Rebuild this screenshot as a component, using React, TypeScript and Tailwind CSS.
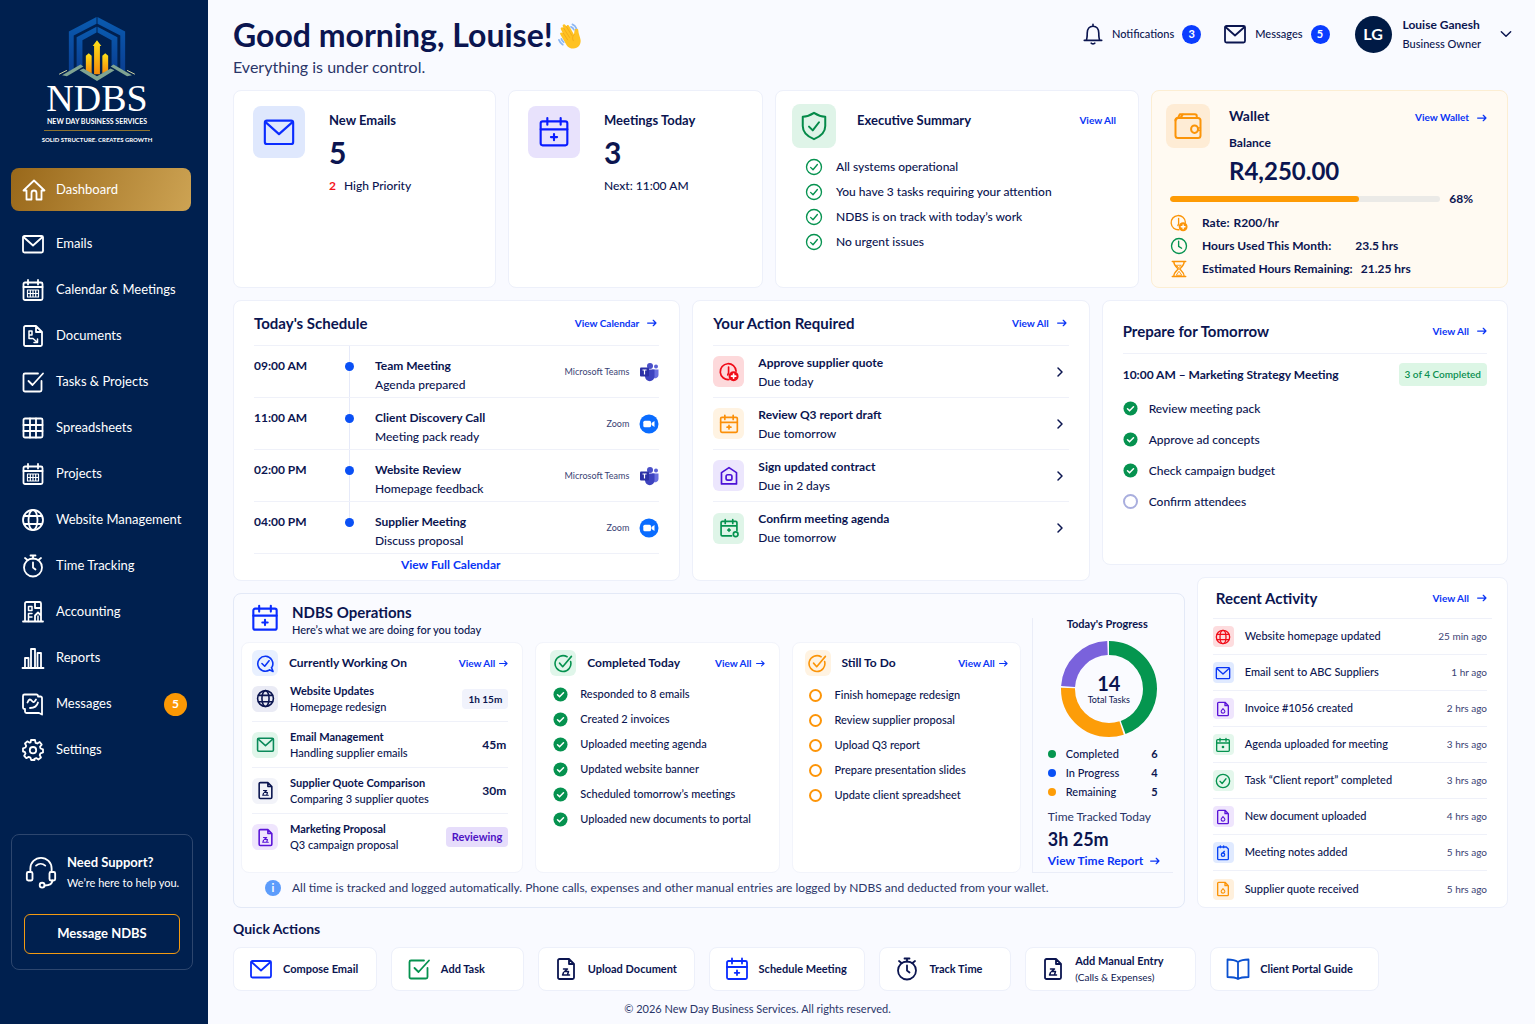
import React from 'react';

type IconName =
  | 'home'
  | 'mail'
  | 'calendarGrid'
  | 'calendarPlus'
  | 'calendarDot'
  | 'calendarGear'
  | 'documentFlow'
  | 'document'
  | 'invoice'
  | 'notes'
  | 'taskBox'
  | 'table'
  | 'globe'
  | 'stopwatch'
  | 'building'
  | 'bars'
  | 'messages'
  | 'gear'
  | 'headset'
  | 'bell'
  | 'shield'
  | 'wallet'
  | 'clock'
  | 'clockCoin'
  | 'hourglass'
  | 'circleCheck'
  | 'circleCheckOut'
  | 'circleCheckTail'
  | 'houseLock'
  | 'book'
  | 'chevronDown'
  | 'chevronRight'
  | 'arrow';

const ICONS: Record<IconName, React.ReactNode> = {
  home: <path d="M1.500 12.500 12 2.500l10.500 10H19.500v9h-5v-6.500a2.500 2.500 0 0 0-5 0v6.500h-5v-9z" />,
  mail: (
    <>
      <rect x="2" y="4" width="20" height="16.500" rx="1.500" />
      <path d="m2.500 5 9.500 8.500L21.500 5" />
    </>
  ),
  calendarGrid: (
    <>
      <rect x="2.500" y="4.500" width="19" height="17.500" rx="1.500" />
      <path d="M2.500 9h19M7 2v4.500M17 2v4.500" />
      <path d="M6.500 12h11v7h-11zM6.500 15.500h11M9.300 12v7M12 12v7M14.700 12v7" strokeWidth="1.200" />
    </>
  ),
  calendarPlus: (
    <>
      <rect x="2" y="4" width="20" height="18" rx="1.500" />
      <path d="M2 10h20M7 1.500v5M17 1.500v5M12 13.500v4.600M9.700 15.800h4.600" />
    </>
  ),
  calendarDot: (
    <>
      <rect x="2.500" y="4" width="19" height="17.500" rx="1.500" />
      <path d="M2.500 9h19M7.500 2v4.500M16.500 2v4.500" />
      <circle cx="12" cy="15" r="1" fill="currentColor" />
    </>
  ),
  calendarGear: (
    <>
      <path d="M15 21.500H4A1.500 1.500 0 0 1 2.500 20V5.500A1.500 1.500 0 0 1 4 4h16a1.500 1.500 0 0 1 1.500 1.500V15M2.500 9.500h19M7.500 2v4.500M16.500 2v4.500M12 13v3M10.500 14.500h3" />
      <circle cx="20" cy="19.500" r="2.800" />
    </>
  ),
  documentFlow: (
    <>
      <path d="M3 3.500A1.500 1.500 0 0 1 4.500 2H15l6 6v12.500a1.500 1.500 0 0 1-1.500 1.500h-15A1.500 1.500 0 0 1 3 20.500zM15 2v6h6" />
      <path d="M8 7h3v4H8zM8 11v3.500h4l4 3.500M16.500 15v3.500H13" strokeWidth="1.500" />
    </>
  ),
  document: (
    <>
      <path d="M4 3.500A1.500 1.500 0 0 1 5.500 2H15l5 5v13.500a1.500 1.500 0 0 1-1.500 1.500h-13A1.500 1.500 0 0 1 4 20.500zM15 2v5h5" />
      <path d="M9.500 12h4l-3 2.500h4l-1 3.300M8.500 18h7M9.500 15.500l-.8 2.300" strokeWidth="1.500" />
    </>
  ),
  invoice: (
    <>
      <path d="M4 3.500A1.500 1.500 0 0 1 5.500 2H15l5 5v13.500a1.500 1.500 0 0 1-1.500 1.500h-13A1.500 1.500 0 0 1 4 20.500zM15 2v5h5" />
      <path d="M12 11.500c1 1.200 2.800 2.300 2.800 4.200a2.800 2.500 0 0 1-5.600 0c0-1.900 1.800-3 2.800-4.200z" strokeWidth="1.600" />
    </>
  ),
  notes: (
    <>
      <path d="M4 4.500A1.500 1.500 0 0 1 5.500 3H17l3 3v14.500a1.500 1.500 0 0 1-1.500 1.500h-13A1.500 1.500 0 0 1 4 20.500zM8 4V1.500M13 4V1.500" />
      <circle cx="12" cy="14.500" r="2.500" />
      <path d="m12 11.500 2-2" />
    </>
  ),
  taskBox: <path d="M20.500 11v9a1.500 1.500 0 0 1-1.500 1.500H4A1.500 1.500 0 0 1 2.500 20V5A1.500 1.500 0 0 1 4 3.500h13M7.500 11l4 4L22 3.500" />,
  table: (
    <>
      <rect x="2.500" y="2.500" width="19" height="19" rx="1.500" />
      <path d="M2.500 9h19M2.500 15h19M9 2.500v19M15 2.500v19" />
    </>
  ),
  globe: (
    <>
      <circle cx="12" cy="12" r="10" />
      <ellipse cx="12" cy="12" rx="4.500" ry="10" />
      <path d="M3.200 8h17.600M3.200 16h17.600" />
    </>
  ),
  stopwatch: (
    <>
      <circle cx="12" cy="13.500" r="9" />
      <path d="M12 8.500v5l2.500 2M9.500 1.500h5M12 1.500v3M4 4l2.500 2M20 4l-2.500 2" />
    </>
  ),
  building: (
    <>
      <path d="M2 21.500h20M4 21.500v-18A1.500 1.500 0 0 1 5.500 2h13A1.500 1.500 0 0 1 20 3.500v18M14 2v6h6M14 21.500v-6l3-3 3 3" />
      <path d="M7.500 6.500h3.500v4H7.500zM7.500 13.500H11M7.500 17H11M7.500 13.500v8M17 16v5" strokeWidth="1.500" />
    </>
  ),
  bars: <path d="M1.500 22h21M4 22V12h3.500v10M10 22V3h4v19M16.500 22V7H20v15" />,
  messages: (
    <>
      <path d="M17 4.500V4a1.500 1.500 0 0 0-1.500-1.500h-12A1.500 1.500 0 0 0 2 4v11.500A1.500 1.500 0 0 0 3.500 17H4v2.500A1.500 1.500 0 0 0 5.500 21H18l3 1.500V6A1.500 1.500 0 0 0 19.500 4.500z" />
      <path d="M6.500 10.500C8 6.500 9.500 7 11 9s2.500 1 4-1.500M9 16c4 0 7-1.500 8-5.500" />
    </>
  ),
  gear: (
    <>
      <path d="M10 2h4l.6 2.800 1.700.7L18.700 4l2 2.600-1.700 2.200.6 1.700 2.400.8v3.200l-2.600.9-.7 1.700 1.300 2.400-2.600 2-2.100-1.400-1.900.7L13.500 22h-3.300l-.8-2.400-1.700-.7-2.400 1.300-2.100-2.400 1.300-2.200-.7-1.700L2 13.500v-3.200l2.500-.8.7-1.700L4 5.500 6.300 3.300l2.300 1.400 1-.4z" />
      <circle cx="12" cy="12.200" r="3.200" />
    </>
  ),
  headset: (
    <>
      <path d="M4.500 12V9.500a7.500 7.500 0 0 1 15 0V12M8.500 7.500a5 5 0 0 1 6.500 0" />
      <rect x="2" y="12" width="4" height="6" rx="1" />
      <rect x="18" y="12" width="4" height="6" rx="1" />
      <path d="M20 18c0 2.500-2.500 3.500-5.500 3.500" />
      <circle cx="12.800" cy="21.300" r="1.700" />
    </>
  ),
  bell: <path d="M2.500 19h19M4.500 19c1-1.500 1.200-3.500 1.200-8 0-4.500 2.500-7.500 6.300-7.500s6.300 3 6.300 7.500c0 4.500.2 6.500 1.200 8M12 3.500v-2M10 22c.5 1 3.500 1 4 0" />,
  shield: (
    <>
      <path d="M12 1.500c3 2 6 3 9 3V12c0 5-4 8.500-9 10.500C7 20.500 3 17 3 12V4.500c3 0 6-1 9-3z" />
      <path d="m8 12.500 3 3 5-6.500" />
    </>
  ),
  wallet: (
    <>
      <rect x="2" y="5.500" width="20" height="16" rx="2" />
      <path d="M2 7.500c0-1.500.8-2 2-2L5.500 2.500h12a1.500 1.500 0 0 1 1.500 1.500v1.500M8 2.500 6 5.500" />
      <rect x="14.500" y="11.500" width="5.500" height="6" rx="2.700" />
      <path d="M20 13.500h2M20 15.500h2" strokeWidth="1" />
    </>
  ),
  clock: (
    <>
      <circle cx="12" cy="12" r="10" />
      <path d="M11.500 5.500v7l4 2.500" />
    </>
  ),
  clockCoin: (
    <>
      <path d="M12 21A9.500 9.500 0 1 1 20.500 11" />
      <path d="M11.500 6v7l-1 2.500" />
      <circle cx="17.500" cy="17" r="5" fill="currentColor" />
      <path d="M15 17h5M17.500 14.500v5" className="stroke-white" />
    </>
  ),
  hourglass: (
    <>
      <path d="M3 2h18M3 22h18M5 2c0 5 3 7 6 10-3 3-6 5-6 10M19 2c0 5-3 7-6 10 3 3 6 5 6 10" />
      <path d="M9 7h6l-3 3zM8.500 20l3.500-5 3.500 5z" strokeWidth="1.200" />
    </>
  ),
  circleCheck: (
    <>
      <circle cx="12" cy="12" r="10" />
      <path d="m7.500 12.500 3.200 3.200 5.800-7" />
    </>
  ),
  circleCheckOut: (
    <>
      <path d="M21 9.500A10 10 0 1 1 16.500 3.500" />
      <path d="m7 11.500 4 4.500L22 3" />
    </>
  ),
  circleCheckTail: (
    <>
      <path d="M17 20.200A9.500 9.500 0 1 1 20.500 16M17 20l4.500 2-2-5" />
      <path d="m7.500 12 3.500 3.500 5.500-7" />
    </>
  ),
  houseLock: (
    <>
      <path d="M3 21.500V8l9-6 9 6v13.500z" />
      <rect x="8.500" y="10.500" width="7" height="6.500" rx="2" />
    </>
  ),
  book: <path d="M12 5c-3-2-6.500-2.500-10.500-2.500V20c4 0 7.500 0 10.500 2 3-2 6.500-2 10.500-2V2.500C18.500 2.500 15 3 12 5zm0 0v17" />,
  chevronDown: <path d="m4 8 8 8 8-8" />,
  chevronRight: <path d="m8 4 8 8-8 8" />,
  arrow: <path d="M1.500 12h20M15 5.500l6.500 6.500-6.500 6.500" />,
};

const Icon = ({
  name,
  className = 'size-6',
  stroke = 1.8,
}: {
  name: IconName;
  className?: string;
  stroke?: number;
}) => (
  <svg
    viewBox="0 0 24 24"
    fill="none"
    stroke="currentColor"
    strokeWidth={stroke}
    strokeLinecap="round"
    strokeLinejoin="round"
    className={`shrink-0 ${className}`}
    aria-hidden="true"
  >
    {ICONS[name]}
  </svg>
);

const CheckDot = () => (
  <svg viewBox="0 0 16 16" className="size-[15px] shrink-0" aria-hidden="true">
    <circle cx="8" cy="8" r="7.500" fill="#05924f" />
    <path d="m4.800 8.200 2.200 2.200 4.200-4.300" fill="none" stroke="#fff" strokeWidth="1.600" strokeLinecap="round" />
  </svg>
);

const RingDot = ({ className }: { className: string }) => (
  <span className={`shrink-0 rounded-full border-2 ${className}`} />
);

const MoreLink = ({ label, arrow = true }: { label: string; arrow?: boolean }) => (
  <a href="#" className="flex items-center gap-2 text-[10px] font-bold whitespace-nowrap text-[#0a35f5]">
    {label}
    {arrow && <Icon name="arrow" className="size-[10px]" stroke={3} />}
  </a>
);

const Logo = () => (
  <div className="flex flex-col items-center text-white">
    <svg viewBox="0 0 80 68" className="h-[66px] w-[80px]" aria-hidden="true">
      <defs>
        <linearGradient id="roof" x1="0" y1="0" x2="0" y2="1">
          <stop offset="0" stopColor="#0a5bb0" />
          <stop offset="1" stopColor="#0a3f93" />
        </linearGradient>
        <linearGradient id="bar" x1="0" y1="0" x2="0" y2="1">
          <stop offset="0" stopColor="#ffe11a" />
          <stop offset="1" stopColor="#f58a0a" />
        </linearGradient>
      </defs>
      <g fill="url(#roof)">
        <path d="M39.500 1v7L16 20v35l-5 2V16z" />
        <path d="M40.500 1v7L64 20v35l5 2V16z" />
        <path d="M39.500 11v6L25 25v26l-6 3V22z" />
        <path d="M40.500 11v6L55 25v26l6 3V22z" />
      </g>
      <g fill="url(#bar)">
        <path d="M28.500 57V41l3-2.500 3 2.500v18z" />
        <path d="M37 60V31h-1.500l4.500-6 4.500 6H43v29z" />
        <path d="M45.500 59V41l3-2.500 3 2.500v16z" />
      </g>
      <g fill="#7fa392">
        <path d="M4 61 23 50l3 2L9 62z" />
        <path d="M76 61 57 50l-3 2 17 10z" />
        <path d="m22 56 4-2 14 8 14-8 4 2-18 11z" />
      </g>
      <path d="m1 60 8-4M79 60l-8-4" stroke="#d9dba5" strokeWidth="1" />
    </svg>
    <div className="font-['Liberation_Serif',serif] text-[38px] leading-[32px]">NDBS</div>
    <div className="mt-[3px] text-[7px] leading-[8px] font-bold whitespace-nowrap">NEW DAY BUSINESS SERVICES</div>
    <div className="mt-[5px] h-px w-[106px] bg-[#8d7330]" />
    <div className="mt-[5px] text-[6px] leading-[8px] font-bold whitespace-nowrap">SOLID STRUCTURE. CREATES GROWTH</div>
  </div>
);

const navItems: { icon: IconName; label: string; badge?: number }[] = [
  { icon: 'mail', label: 'Emails' },
  { icon: 'calendarGrid', label: 'Calendar & Meetings' },
  { icon: 'documentFlow', label: 'Documents' },
  { icon: 'taskBox', label: 'Tasks & Projects' },
  { icon: 'table', label: 'Spreadsheets' },
  { icon: 'calendarGrid', label: 'Projects' },
  { icon: 'globe', label: 'Website Management' },
  { icon: 'stopwatch', label: 'Time Tracking' },
  { icon: 'building', label: 'Accounting' },
  { icon: 'bars', label: 'Reports' },
  { icon: 'messages', label: 'Messages', badge: 5 },
  { icon: 'gear', label: 'Settings' },
];

const Sidebar = () => (
  <aside className="flex w-[208px] shrink-0 flex-col bg-[#00204f] pt-4 text-white">
    <div className="pr-[14px]">
      <Logo />
    </div>
    <nav className="mt-6 pr-[17px] pl-[11px] text-[13px]">
      <a
        href="#"
        className="flex h-[43px] items-center gap-[10px] rounded-lg bg-linear-[110deg] from-[#99681a] to-[#cda353] pl-[11px]"
      >
        <Icon name="home" />
        Dashboard
      </a>
      <ul className="mt-[10px]">
        {navItems.map((n) => (
          <li key={n.label}>
            <a href="#" className="flex h-[46px] items-center gap-[11px] pr-1 pl-[10px] whitespace-nowrap">
              <Icon name={n.icon} />
              {n.label}
              {n.badge && (
                <span className="ml-auto flex size-[23px] items-center justify-center rounded-full bg-[#fb9804] text-xs font-bold">
                  {n.badge}
                </span>
              )}
            </a>
          </li>
        ))}
      </ul>
    </nav>
    <section className="mt-[61px] mr-[15px] ml-[11px] rounded-lg border border-[#2d466e] px-3 pb-[15px]">
      <div className="mt-4 flex items-center">
        <Icon name="headset" className="size-[34px]" stroke={1.3} />
        <div className="ml-[9px] whitespace-nowrap">
          <h2 className="text-[13px] leading-[22px] font-bold">Need Support?</h2>
          <p className="text-[11px] leading-5">We’re here to help you.</p>
        </div>
      </div>
      <button className="mt-[21px] h-10 w-full rounded-md border border-[#f39a12] text-[13px] font-bold">
        Message NDBS
      </button>
    </section>
  </aside>
);

const WavingHand = () => (
  <svg viewBox="0 0 26 28" className="size-[27px]" aria-hidden="true">
    <g fill="#ffc222">
      <path d="M9 24 2.500 13c-1-1.800 1-3 2.300-1.500L3 7.500C2.200 5.700 4.500 4.500 5.600 6L5 4.500C4.300 2.700 6.700 1.600 7.700 3.200L9 5c-.5-1.700 1.800-2.500 2.600-.9l5 8.900.6-4.500c.2-2.500 3.900-2.200 3.900.2 0 3 2 6.500 2.400 10.300.4 4.500-2.500 8.500-7.500 8.500-3 0-5.500-1-7-3.500z" />
    </g>
    <path d="m5.500 11.500 4.500 7M6 6.500l6 9.500M8.500 4.500l6 9.500M17 13c-2 1.500-2.500 4-1 6.500" fill="none" stroke="#f0a418" strokeWidth=".8" strokeLinecap="round" />
    <path d="M15 2.500c2 .8 3.200 2 4 4M13.500 5c1.500.5 2.500 1.500 3 3M1 18.500c.8 2.200 2 3.700 4 5M3.500 17.500c.5 1.500 1.500 2.500 2.500 3.500" fill="none" stroke="#8db7f2" strokeWidth="1.800" strokeLinecap="round" />
  </svg>
);

const CountBadge = ({ count }: { count: number }) => (
  <span className="flex size-[19px] items-center justify-center rounded-full bg-[#0a3cff] text-[11px] font-bold text-white">
    {count}
  </span>
);

const Header = () => (
  <header className="flex justify-between">
    <div>
      <h1 className="flex items-center gap-1 text-[32px] leading-10 font-bold whitespace-nowrap">
        Good morning, Louise!
        <WavingHand />
      </h1>
      <p className="text-base leading-6 text-[#2a3568]">Everything is under control.</p>
    </div>
    <div className="flex h-[38px] items-center text-[11px] font-medium">
      <button className="flex items-center gap-2">
        <Icon name="bell" className="size-[22px]" />
        Notifications
        <CountBadge count={3} />
      </button>
      <button className="ml-[22px] flex items-center gap-2">
        <Icon name="mail" className="size-6" />
        Messages
        <CountBadge count={5} />
      </button>
      <button className="ml-[25px] flex items-center text-left">
        <span className="flex size-[37px] items-center justify-center rounded-full bg-[#001a45] text-base font-bold text-white">
          LG
        </span>
        <span className="ml-[11px] leading-[19px] whitespace-nowrap">
          <span className="block text-xs leading-[19px] font-bold">Louise Ganesh</span>
          <span className="block">Business Owner</span>
        </span>
        <Icon name="chevronDown" className="ml-[18px] size-[14px]" stroke={2.5} />
      </button>
    </div>
  </header>
);

const CARD = 'rounded-lg border border-[#edf0fa] bg-white';

const SummaryRow = () => (
  <section className="mt-[11px] mr-[5px] grid grid-cols-[263fr_255fr_364fr_357fr] gap-[12px]">
    <article className={`flex min-h-[198px] gap-6 px-[19px] pt-[15px] ${CARD}`}>
      <span className="flex size-[52px] items-center justify-center rounded-lg bg-[#dfe8fd] text-[#0a2cff]">
        <Icon name="mail" className="size-[34px]" stroke={1.5} />
      </span>
      <div>
        <h2 className="mt-1 text-[13px] leading-5 font-bold">New Emails</h2>
        <p className="mt-[2px] text-3xl leading-10 font-bold">5</p>
        <p className="mt-1 text-xs leading-5 font-medium">
          <span className="mr-2 font-bold text-[#f5141c]">2</span>High Priority
        </p>
      </div>
    </article>
    <article className={`flex gap-6 px-[19px] pt-[15px] ${CARD}`}>
      <span className="flex size-[52px] items-center justify-center rounded-lg bg-[#e8e2fc] text-[#0a1cff]">
        <Icon name="calendarPlus" className="size-8" stroke={1.6} />
      </span>
      <div>
        <h2 className="mt-1 text-[13px] leading-5 font-bold">Meetings Today</h2>
        <p className="mt-[2px] text-3xl leading-10 font-bold">3</p>
        <p className="mt-1 text-xs leading-5 font-medium">Next: 11:00 AM</p>
      </div>
    </article>
    <article className={`px-4 pt-[13px] ${CARD}`}>
      <div className="flex h-11 items-center">
        <span className="flex size-11 items-center justify-center rounded-lg bg-[#dff4e8] text-[#058a49]">
          <Icon name="shield" className="size-[30px]" stroke={1.6} />
        </span>
        <h2 className="mr-auto ml-[21px] pb-3 text-[13px] leading-5 font-bold">Executive Summary</h2>
        <span className="mr-[6px] pb-3">
          <MoreLink label="View All" arrow={false} />
        </span>
      </div>
      <ul className="mt-[6px] ml-[13px] text-xs font-medium">
        {[
          'All systems operational',
          'You have 3 tasks requiring your attention',
          'NDBS is on track with today’s work',
          'No urgent issues',
        ].map((line) => (
          <li key={line} className="flex h-[25px] items-center gap-[13px]">
            <Icon name="circleCheck" className="size-[18px] text-[#05924f]" />
            {line}
          </li>
        ))}
      </ul>
    </article>
    <article className="rounded-lg border border-[#fceed3] bg-[#fffaf2] px-[14px] pt-[13px]">
      <div className="flex">
        <span className="flex size-11 items-center justify-center rounded-lg bg-[#feecd5] text-[#fb9408]">
          <Icon name="wallet" className="size-[30px]" stroke={1.6} />
        </span>
        <div className="ml-[19px]">
          <h2 className="text-sm leading-6 font-bold">Wallet</h2>
          <p className="mt-[3px] text-xs leading-6 font-bold">Balance</p>
          <p className="text-2xl leading-8 font-bold">R4,250.00</p>
        </div>
        <div className="mt-[6px] mr-[6px] ml-auto">
          <MoreLink label="View Wallet" />
        </div>
      </div>
      <div className="mt-[2px] ml-1 flex items-center gap-[9px] text-xs leading-5 font-bold">
        <div className="h-[6px] flex-1 overflow-hidden rounded-full bg-[#ebeae7]">
          <div className="h-full rounded-full bg-[#fe9b05]" style={{ width: '70%' }} />
        </div>
        <span className="mr-5">68%</span>
      </div>
      <dl className="mt-[2px] ml-1 text-xs leading-[23px] font-bold">
        <div className="flex items-center">
          <Icon name="clockCoin" className="mr-[14px] size-[18px] text-[#fb9408]" />
          <dt>Rate:</dt>
          <dd className="ml-1">R200/hr</dd>
        </div>
        <div className="flex items-center">
          <Icon name="clock" className="mr-[14px] size-[18px] text-[#05924f]" />
          <dt>Hours Used This Month:</dt>
          <dd className="ml-6">23.5 hrs</dd>
        </div>
        <div className="flex items-center">
          <Icon name="hourglass" className="mr-[14px] size-[18px] text-[#fb9408]" />
          <dt>Estimated Hours Remaining:</dt>
          <dd className="ml-2">21.25 hrs</dd>
        </div>
      </dl>
    </article>
  </section>
);

const TeamsLogo = () => (
  <svg viewBox="0 0 20 20" className="size-5" aria-hidden="true">
    <circle cx="11" cy="4" r="3" fill="#4a50c8" />
    <circle cx="17" cy="4.500" r="2" fill="#5b62d6" />
    <path d="M13 7.500h6.500v5.500a3.500 3.500 0 0 1-5 3z" fill="#6a70e0" />
    <path d="M6 7.500h9.500v7a4.700 4.700 0 0 1-9.500 0z" fill="#3d43bf" />
    <rect x="1" y="5.500" width="9" height="9" rx="1" fill="#2b30a6" />
    <path d="M3.500 8h4M5.500 8v4.500" stroke="#fff" strokeWidth="1.200" />
  </svg>
);

const ZoomLogo = () => (
  <svg viewBox="0 0 20 20" className="size-5" aria-hidden="true">
    <circle cx="10" cy="10" r="9.500" fill="#0a6cff" />
    <rect x="4.300" y="6.800" width="7.700" height="6.400" rx="1.500" fill="#fff" />
    <path d="m12.500 9 3-2v6l-3-2z" fill="#fff" />
  </svg>
);

const schedule = [
  { time: '09:00 AM', title: 'Team Meeting', note: 'Agenda prepared', app: 'Microsoft Teams' },
  { time: '11:00 AM', title: 'Client Discovery Call', note: 'Meeting pack ready', app: 'Zoom' },
  { time: '02:00 PM', title: 'Website Review', note: 'Homepage feedback', app: 'Microsoft Teams' },
  { time: '04:00 PM', title: 'Supplier Meeting', note: 'Discuss proposal', app: 'Zoom' },
];

const ScheduleCard = () => (
  <article className={`px-5 pb-[5px] ${CARD}`}>
    <div className="flex h-[45px] items-center justify-between border-b border-[#eff1f9]">
      <h2 className="text-[15px] font-bold">Today's Schedule</h2>
      <div className="mr-[2px]">
        <MoreLink label="View Calendar" />
      </div>
    </div>
    <ol className="text-xs">
      {schedule.map((s, i) => (
        <li key={s.time} className="flex h-[52px] border-b border-[#eff1f9]">
          <time className="mt-[10px] w-[91px] leading-5 font-bold">{s.time}</time>
          <span className="flex w-[9px] flex-col items-center">
            <span className="h-4 w-px bg-[#e6eaf9]" />
            <span className="size-[9px] rounded-full bg-[#0a50f5]" />
            {i < schedule.length - 1 && <span className="w-px flex-1 bg-[#e6eaf9]" />}
          </span>
          <div className="mt-[10px] ml-[21px] flex-1 leading-[19px]">
            <h3 className="font-bold">{s.title}</h3>
            <p className="font-medium">{s.note}</p>
          </div>
          <span className="flex items-center gap-[10px] text-[9px] text-[#3a4374]">
            {s.app}
            {s.app == 'Zoom' ? <ZoomLogo /> : <TeamsLogo />}
          </span>
        </li>
      ))}
    </ol>
    <a href="#" className="mt-[1px] mr-3 block text-center text-xs leading-5 font-bold text-[#0a35f5]">
      View Full Calendar
    </a>
  </article>
);

const actions: { icon: IconName; tone: string; title: string; due: string }[] = [
  { icon: 'clockCoin', tone: 'bg-[#fdd9db] text-[#f00c18]', title: 'Approve supplier quote', due: 'Due today' },
  { icon: 'calendarPlus', tone: 'bg-[#fff3e2] text-[#fb8f08]', title: 'Review Q3 report draft', due: 'Due tomorrow' },
  { icon: 'houseLock', tone: 'bg-[#ece6fd] text-[#4b12d6]', title: 'Sign updated contract', due: 'Due in 2 days' },
  { icon: 'calendarGear', tone: 'bg-[#dff5e8] text-[#05924f]', title: 'Confirm meeting agenda', due: 'Due tomorrow' },
];

const ActionsCard = () => (
  <article className={`px-5 ${CARD}`}>
    <div className="flex h-[45px] items-center justify-between border-b border-[#eff1f9]">
      <h2 className="text-[15px] font-bold">Your Action Required</h2>
      <div className="mr-[2px]">
        <MoreLink label="View All" />
      </div>
    </div>
    <ul>
      {actions.map((a) => (
        <li key={a.title} className="h-[52px] border-b border-[#eff1f9] last:border-0">
          <a href="#" className="flex h-full items-center">
            <span className={`flex size-[31px] items-center justify-center rounded-md ${a.tone}`}>
              <Icon name={a.icon} className="size-5" stroke={2} />
            </span>
            <span className="ml-[14px] flex-1 text-xs leading-[19px]">
              <span className="block font-bold">{a.title}</span>
              <span className="block font-medium">{a.due}</span>
            </span>
            <Icon name="chevronRight" className="mr-[3px] size-3" stroke={3} />
          </a>
        </li>
      ))}
    </ul>
  </article>
);

const prepSteps = ['Review meeting pack', 'Approve ad concepts', 'Check campaign budget', 'Confirm attendees'];

const PrepareCard = () => (
  <article className={`mb-4 px-5 pt-2 ${CARD}`}>
    <div className="flex h-[45px] items-center justify-between border-b border-[#eff1f9]">
      <h2 className="text-[15px] font-bold">Prepare for Tomorrow</h2>
      <MoreLink label="View All" />
    </div>
    <div className="mt-[9px] flex h-[23px] items-center justify-between">
      <h3 className="text-xs font-bold">10:00 AM – Marketing Strategy Meeting</h3>
      <span className="rounded bg-[#dcf6e5] px-[6px] text-[10px] leading-[23px] font-semibold whitespace-nowrap text-[#0a8f50]">
        3 of 4 Completed
      </span>
    </div>
    <ul className="mt-[7px] text-xs font-medium">
      {prepSteps.map((step, i) => (
        <li key={step} className="flex h-[31px] items-center gap-[11px]">
          {i < 3 ? <CheckDot /> : <RingDot className="size-[15px] border-[#a9aede]" />}
          {step}
        </li>
      ))}
    </ul>
  </article>
);

const OpsHeading = ({ icon, tone, label }: { icon: IconName; tone: string; label: string }) => (
  <div className="flex items-center">
    <span className={`flex size-[26px] items-center justify-center rounded-md ${tone}`}>
      <Icon name={icon} className="size-[19px]" stroke={2} />
    </span>
    <h3 className="mr-auto ml-[11px] text-xs font-bold whitespace-nowrap">{label}</h3>
    <a href="#" className="flex items-center gap-1 text-[10px] font-bold whitespace-nowrap text-[#0a35f5]">
      View All
      <Icon name="arrow" className="size-[9px]" stroke={3} />
    </a>
  </div>
);

const working: { icon: IconName; tone: string; title: string; note: string; time: string; pill?: string }[] = [
  { icon: 'globe', tone: 'bg-[#eaebf5] text-[#0b1550]', title: 'Website Updates', note: 'Homepage redesign', time: '1h 15m', pill: 'px-[6px] bg-[#f1f3fc] text-[10px]' },
  { icon: 'mail', tone: 'bg-[#e0f6ea] text-[#0a8a5a]', title: 'Email Management', note: 'Handling supplier emails', time: '45m' },
  { icon: 'document', tone: 'bg-[#f2f3f9] text-[#0b1550]', title: 'Supplier Quote Comparison', note: 'Comparing 3 supplier quotes', time: '30m' },
  { icon: 'document', tone: 'bg-[#efe5fd] text-[#5a14d8]', title: 'Marketing Proposal', note: 'Q3 campaign proposal', time: 'Reviewing', pill: 'px-[6px] bg-[#e6ddfb] text-[11px] text-[#4d12c4]' },
];

const completed = [
  'Responded to 8 emails',
  'Created 2 invoices',
  'Uploaded meeting agenda',
  'Updated website banner',
  'Scheduled tomorrow’s meetings',
  'Uploaded new documents to portal',
];

const todo = [
  'Finish homepage redesign',
  'Review supplier proposal',
  'Upload Q3 report',
  'Prepare presentation slides',
  'Update client spreadsheet',
];

// shares of the ring, in percent
const ring = [
  { from: 0, size: 45, color: '#05964f' },
  { from: 45, size: 31, color: '#fd9d08' },
  { from: 76, size: 24, color: '#7a62dc' },
];

const Progress = () => (
  <div className="mt-6 mr-[11px] flex w-[141px] flex-col border-b border-l border-[#eaedf8] pl-[15px]">
    <h3 className="mr-[6px] -mt-1 text-center text-[11px] leading-5 font-bold">Today's Progress</h3>
    <div className="relative mt-[6px] ml-3 size-[98px]">
      <svg viewBox="0 0 98 98" className="size-full -rotate-90" aria-hidden="true">
        {ring.map((r) => (
          <circle
            key={r.color}
            cx="49"
            cy="49"
            r="41"
            fill="none"
            stroke={r.color}
            strokeWidth="14"
            pathLength="100"
            strokeDasharray={`${r.size - 0.6} 100`}
            strokeDashoffset={-r.from}
          />
        ))}
      </svg>
      <div className="absolute inset-0 flex flex-col items-center justify-center">
        <span className="text-xl leading-[22px] font-bold">14</span>
        <span className="text-[9px] leading-3">Total Tasks</span>
      </div>
    </div>
    <dl className="mt-[6px] text-[11px] leading-[19px] font-medium">
      {[
        { label: 'Completed', value: 6, dot: 'bg-[#05964f]' },
        { label: 'In Progress', value: 4, dot: 'bg-[#0a50f5]' },
        { label: 'Remaining', value: 5, dot: 'bg-[#fd9d08]' },
      ].map((row) => (
        <div key={row.label} className="flex items-center">
          <span className={`size-2 rounded-full ${row.dot}`} />
          <dt className="ml-[10px]">{row.label}</dt>
          <dd className="mr-[15px] ml-auto font-bold">{row.value}</dd>
        </div>
      ))}
    </dl>
    <p className="mt-[6px] text-xs leading-5 text-[#2a3568]">Time Tracked Today</p>
    <p className="text-lg leading-6 font-bold">3h 25m</p>
    <a href="#" className="mb-[1px] flex items-center gap-[7px] text-xs leading-5 font-bold whitespace-nowrap text-[#0a35f5]">
      View Time Report
      <Icon name="arrow" className="size-[10px]" stroke={3} />
    </a>
  </div>
);

const Operations = () => (
  <article className="rounded-lg border border-[#e3e9f7] bg-[#fafbff]">
    <div className="flex">
      <div className="flex flex-1 flex-col pl-[7px]">
        <div className="flex h-12 items-center pl-[10px]">
          <Icon name="calendarPlus" className="size-7 text-[#0a2cff]" />
          <div className="mt-1 ml-[13px]">
            <h2 className="text-[15px] leading-5 font-bold">NDBS Operations</h2>
            <p className="text-[11px] leading-4 font-medium">Here’s what we are doing for you today</p>
          </div>
        </div>
        <div className="mr-[11px] grid flex-1 grid-cols-[282fr_244fr_229fr] gap-3">
          <div className={`px-[10px] pt-[7px] ${CARD} border-[#f2f4fb]`}>
            <div className="mr-1">
              <OpsHeading icon="circleCheckTail" tone="bg-[#e8f0ff] text-[#0a35f5]" label="Currently Working On" />
            </div>
            <ul className="mr-1">
              {working.map((w) => (
                <li key={w.title} className="flex h-[46px] items-center border-b border-[#eff1f9] last:border-0">
                  <span className={`flex size-[26px] items-center justify-center rounded-md ${w.tone}`}>
                    <Icon name={w.icon} className="size-[19px]" stroke={2} />
                  </span>
                  <div className="ml-3 flex-1 text-[11px] leading-4 whitespace-nowrap">
                    <h4 className="font-bold">{w.title}</h4>
                    <p className="font-medium">{w.note}</p>
                  </div>
                  <span className={w.pill ? `rounded leading-5 font-bold ${w.pill}` : 'mr-[2px] text-xs font-bold'}>
                    {w.time}
                  </span>
                </li>
              ))}
            </ul>
          </div>
          <div className={`px-[14px] pt-[7px] ${CARD} border-[#f2f4fb]`}>
            <OpsHeading icon="circleCheckOut" tone="bg-[#e0f6ea] text-[#05924f]" label="Completed Today" />
            <ul className="mt-[6px] ml-[3px] text-[11px] font-medium">
              {completed.map((c) => (
                <li key={c} className="flex h-[25px] items-center gap-3 whitespace-nowrap">
                  <CheckDot />
                  {c}
                </li>
              ))}
            </ul>
          </div>
          <div className={`px-3 pt-[7px] ${CARD} border-[#f2f4fb]`}>
            <OpsHeading icon="circleCheckOut" tone="bg-[#fff3e2] text-[#fb9408]" label="Still To Do" />
            <ul className="mt-[7px] ml-1 text-[11px] font-medium">
              {todo.map((c) => (
                <li key={c} className="flex h-[25px] items-center gap-[13px] whitespace-nowrap">
                  <RingDot className="size-[13px] border-[#fd9508]" />
                  {c}
                </li>
              ))}
            </ul>
          </div>
        </div>
      </div>
      <Progress />
    </div>
    <p className="flex h-[30px] items-center gap-[11px] pl-[31px] text-xs text-[#2a3568]">
      <span className="flex size-4 items-center justify-center rounded-full bg-[#5c9cfb] text-[11px] font-bold text-white">
        i
      </span>
      All time is tracked and logged automatically. Phone calls, expenses and other manual entries are logged by NDBS
      and deducted from your wallet.
    </p>
  </article>
);

const activity: { icon: IconName; tone: string; label: string; when: string }[] = [
  { icon: 'globe', tone: 'bg-[#fddcde] text-[#f00c18]', label: 'Website homepage updated', when: '25 min ago' },
  { icon: 'mail', tone: 'bg-[#e0eaff] text-[#0a35f5]', label: 'Email sent to ABC Suppliers', when: '1 hr ago' },
  { icon: 'invoice', tone: 'bg-[#efe5fd] text-[#5a14d8]', label: 'Invoice #1056 created', when: '2 hrs ago' },
  { icon: 'calendarDot', tone: 'bg-[#e4f7ec] text-[#05924f]', label: 'Agenda uploaded for meeting', when: '3 hrs ago' },
  { icon: 'circleCheck', tone: 'bg-[#e4f7ec] text-[#05924f]', label: 'Task “Client report” completed', when: '3 hrs ago' },
  { icon: 'invoice', tone: 'bg-[#efe5fd] text-[#5a14d8]', label: 'New document uploaded', when: '4 hrs ago' },
  { icon: 'notes', tone: 'bg-[#e0eaff] text-[#0a45f5]', label: 'Meeting notes added', when: '5 hrs ago' },
  { icon: 'invoice', tone: 'bg-[#fff0dc] text-[#fb9408]', label: 'Supplier quote received', when: '5 hrs ago' },
];

const RecentActivity = () => (
  <article className={`-mt-4 px-[15px] ${CARD}`}>
    <div className="flex h-[41px] items-center justify-between border-b border-[#eff1f9] pr-[5px] pl-[3px]">
      <h2 className="text-[15px] font-bold">Recent Activity</h2>
      <MoreLink label="View All" />
    </div>
    <ul className="mr-[5px] text-[11px]">
      {activity.map((a) => (
        <li key={a.label} className="flex h-9 items-center border-b border-[#eff1f9] last:border-0">
          <span className={`flex size-[21px] items-center justify-center rounded ${a.tone}`}>
            <Icon name={a.icon} className="size-4" stroke={2} />
          </span>
          <span className="ml-[11px] font-medium">{a.label}</span>
          <span className="ml-auto text-[10px] text-[#3a4374]">{a.when}</span>
        </li>
      ))}
    </ul>
  </article>
);

const quickActions: { icon: IconName; tone: string; label: string; hint?: string }[] = [
  { icon: 'mail', tone: 'text-[#0a2cff]', label: 'Compose Email' },
  { icon: 'taskBox', tone: 'text-[#05924f]', label: 'Add Task' },
  { icon: 'document', tone: 'text-[#0b1550]', label: 'Upload Document' },
  { icon: 'calendarPlus', tone: 'text-[#0a2cff]', label: 'Schedule Meeting' },
  { icon: 'stopwatch', tone: 'text-[#0b1550]', label: 'Track Time' },
  { icon: 'document', tone: 'text-[#0b1550]', label: 'Add Manual Entry', hint: '(Calls & Expenses)' },
  { icon: 'book', tone: 'text-[#0a50d0]', label: 'Client Portal Guide' },
];

const QuickActions = () => (
  <section className="mt-[11px]">
    <h2 className="text-sm leading-5 font-bold">Quick Actions</h2>
    <div className="mt-2 mr-[134px] grid grid-cols-[144fr_133fr_157fr_157fr_132fr_171fr_169fr] gap-[14px]">
      {quickActions.map((q) => (
        <button key={q.label} className={`flex h-[44px] items-center gap-[10px] pl-[15px] text-left ${CARD}`}>
          <Icon name={q.icon} className={`size-6 ${q.tone}`} />
          <span className="text-[11px] leading-4 whitespace-nowrap">
            <span className="block font-bold">{q.label}</span>
            {q.hint && <span className="block text-[10px]">{q.hint}</span>}
          </span>
        </button>
      ))}
    </div>
  </section>
);

const App = () => {
  return (
    <div className="flex min-h-screen bg-[#f9faff] font-[Lato,'Open_Sans',sans-serif] text-[#0b1550]">
      <Sidebar />
      <main className="flex-1 pt-[15px] pr-[22px] pl-[25px]">
        <Header />
        <SummaryRow />
        <section className="mt-3 mr-[5px] grid grid-cols-[447fr_397fr_406fr] gap-3">
          <ScheduleCard />
          <ActionsCard />
          <PrepareCard />
        </section>
        <section className="mt-3 mr-[5px] grid grid-cols-[951fr_311fr] gap-3">
          <Operations />
          <RecentActivity />
        </section>
        <QuickActions />
        <footer className="mt-[10px] pr-[231px] text-center text-[11px] leading-4 text-[#2a3568]">
          © 2026 New Day Business Services. All rights reserved.
        </footer>
      </main>
    </div>
  );
};

export default App;
